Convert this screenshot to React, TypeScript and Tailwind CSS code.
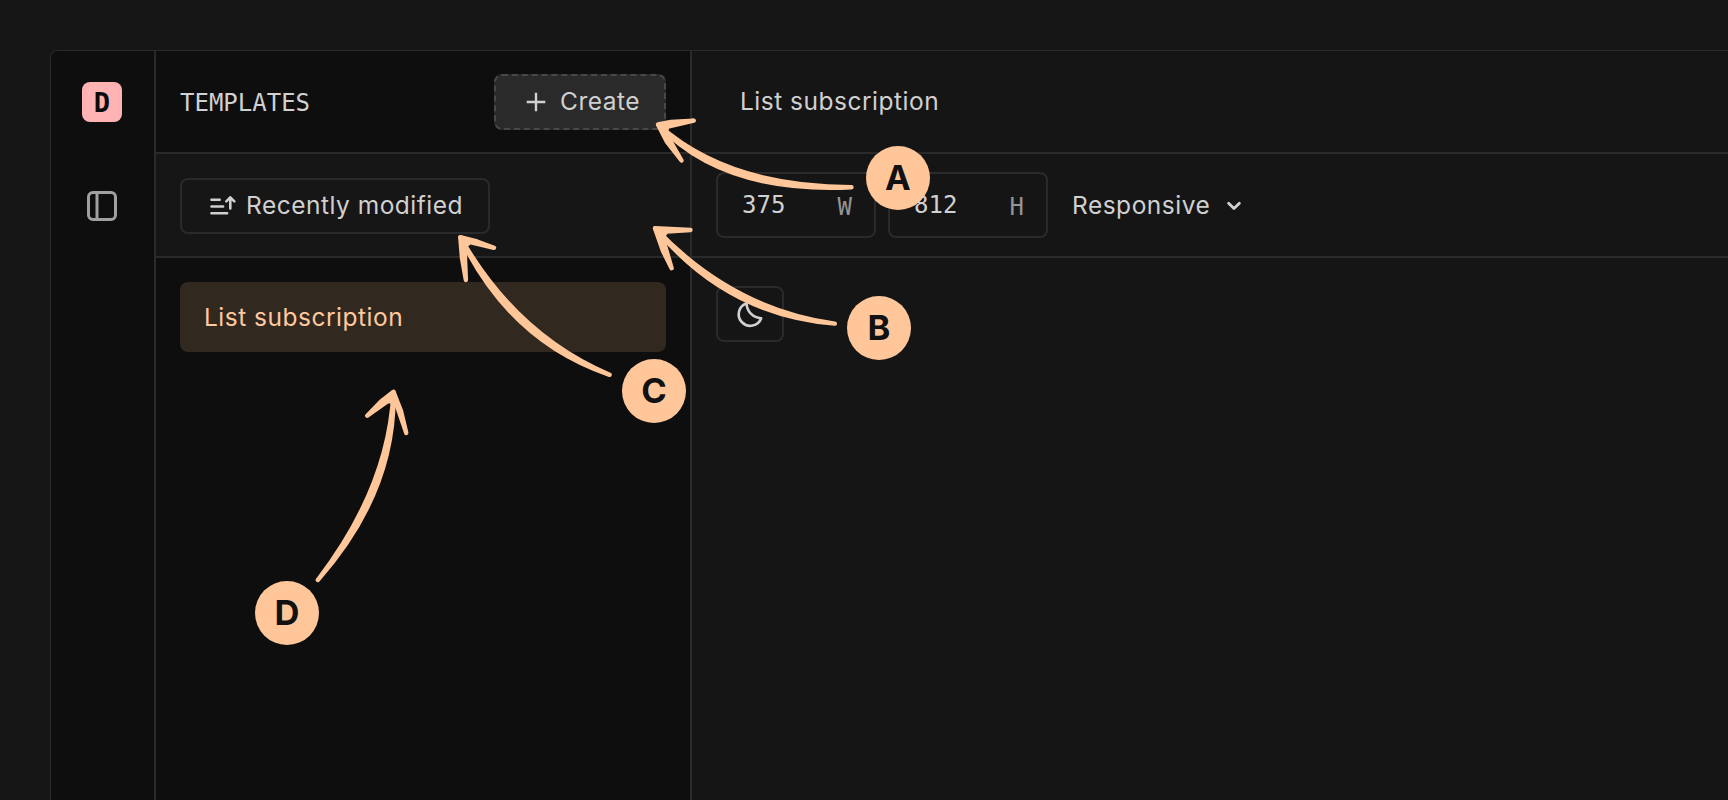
import type { ReactNode } from "react";

const sans = "font-['Inter','Liberation_Sans',sans-serif]";
const mono = "font-['DejaVu_Sans_Mono','Liberation_Mono',monospace]";
const label = "text-[24.5px] tracking-[0.5px]";

function Rail() {
  return (
    <aside className="flex w-[105px] shrink-0 flex-col items-center border-r-2 border-[#2a2a2a] bg-[#0e0e0e] pt-[31px] pr-px">
      <div className={`flex size-10 items-center justify-center rounded-lg bg-[#ffb3b3] text-[27px] leading-none font-bold text-[#0b0b0b] ${mono}`}>
        D
      </div>
      <svg className="mt-[69px] size-[30px]" viewBox="0 0 30 30" fill="none" stroke="#a0a0a0" strokeWidth="3">
        <rect x="1.5" y="1.5" width="27" height="27" rx="4.5" />
        <path d="M10 2v26" />
      </svg>
    </aside>
  );
}

function Templates() {
  return (
    <section className="flex w-[536px] shrink-0 flex-col border-r-2 border-[#2a2a2a] bg-[#0e0e0e]">
      <header className="flex h-[103px] items-center justify-between border-b-2 border-[#2a2a2a] pr-6 pl-6">
        <h2 className={`pt-[2px] text-[24px] leading-8 ${mono}`}>TEMPLATES</h2>
        <button className={`flex h-14 w-[172px] items-center rounded-lg border-2 border-dashed border-[#484848] bg-[#2a2a2a] pl-[30px] ${label}`}>
          <svg className="mr-[14px] size-5" viewBox="0 0 20 20" fill="none" stroke="currentColor" strokeWidth="2.4">
            <path d="M10 .7v18.6M.7 10h18.6" />
          </svg>
          Create
        </button>
      </header>
      <div className="flex h-[104px] items-center border-b-2 border-[#2a2a2a] bg-[#161616] pt-[2px] pl-6">
        <button className={`flex h-14 w-[310px] items-center rounded-lg border-2 border-[#2a2a2a] pb-[2px] pl-7 ${label}`}>
          <svg className="mt-px mr-2.5 h-5 w-[26px] shrink-0" viewBox="0 0 26 20" fill="none" stroke="currentColor" strokeWidth="2.6" strokeLinecap="round" strokeLinejoin="round">
            <path d="M1.5 3.8h8.2M1.5 10.5h11.6M1.5 17.2h15.6M20.3 12.5V2M16.3 5.3l4-4 4 4" />
          </svg>
          Recently modified
        </button>
      </div>
      <ul className="px-6 pt-6">
        <li className={`flex h-[70px] items-center rounded-lg bg-[#31281f] pt-px pl-6 text-[#ffc9a0] ${label}`}>
          List subscription
        </li>
      </ul>
    </section>
  );
}

function SizeField({ value, unit }: { value: string; unit: string }) {
  return (
    <label className={`flex h-[66px] w-40 items-center justify-between rounded-lg border-2 border-[#2a2a2a] pr-[22px] pl-6 text-[24px] leading-8 ${mono}`}>
      <span className="pb-px">{value}</span>
      <span className="pt-[3px] text-[#949494]">{unit}</span>
    </label>
  );
}

function Preview() {
  return (
    <main className="flex min-w-0 flex-1 flex-col bg-[#151515]">
      <header className={`flex h-[103px] items-center border-b-2 border-[#2a2a2a] pl-12 ${label}`}>
        List subscription
      </header>
      <div className="flex h-[104px] items-center gap-3 border-b-2 border-[#2a2a2a] pl-6">
        <SizeField value="375" unit="W" />
        <SizeField value="812" unit="H" />
        <div className={`ml-3 flex items-center ${label}`}>
          Responsive
          <svg className="mt-px ml-4 h-3 w-4" viewBox="0 0 16 12" fill="none" stroke="currentColor" strokeWidth="2.8" strokeLinecap="round" strokeLinejoin="round">
            <path d="m2.6 3.2 5.4 5.4 5.4-5.4" />
          </svg>
        </div>
      </div>
      <div className="pt-7 pl-6">
        <button className="flex h-14 w-[68px] items-center justify-center rounded-lg border-2 border-[#2a2a2a]">
          <svg className="size-8" viewBox="0 0 32 32" fill="none" stroke="currentColor" strokeWidth="2.6" strokeLinecap="round" strokeLinejoin="round">
            <path d="M12.6 5.2A11.6 11.6 0 1 0 27.200 20.200A15 15 0 0 1 12.600 5.200Z" />
          </svg>
        </button>
      </div>
    </main>
  );
}

function Marker({ className, children }: { className: string; children: ReactNode }) {
  return (
    <div className={`absolute flex size-16 items-center justify-center rounded-full bg-[#ffc799] text-[34.5px] leading-none font-bold text-[#111111] ${className}`}>
      {children}
    </div>
  );
}

function Annotations() {
  return (
    <div className="pointer-events-none absolute inset-0">
      <svg className="absolute inset-0 h-[800px] w-[1728px]" viewBox="0 0 1728 800" fill="#ffc799" stroke="#ffc799" strokeWidth="4.4" strokeLinecap="round" strokeLinejoin="round">
        <path d="M658.5 125Q728 187 851.500 187.300Q723 193.500 658.500 125Z" />
        <path d="M658 124.500 671 122 693.800 120.600 668 126.500 665 131.500 681.500 160.500 667 142Z" />
        <path d="M655.500 228.500Q732.500 309.500 834.800 323.600Q727 315 655.500 228.500Z" />
        <path d="M655 228.200 690.500 230 666.500 231.500 662.500 237 671.600 268.200 663 251Z" />
        <path d="M460.500 237.500Q516 335 609.600 374.800Q510 341 460.500 237.500Z" />
        <path d="M460.300 237.200 477 241.500 494 247.800 470 242 464.500 246.500 465.900 280 462 258Z" />
        <path d="M393.500 392.300Q388.500 488 317.800 580Q395.500 492 393.500 392.300Z" />
        <path d="M393.500 391.800 381 401.500 367.200 415.700 388 401 395.500 401.500 406.300 433 401 411Z" />
      </svg>
      <Marker className="top-[146px] left-[866px]">A</Marker>
      <Marker className="top-[296px] left-[847px]">B</Marker>
      <Marker className="top-[359px] left-[622px]">C</Marker>
      <Marker className="top-[581px] left-[255px]">D</Marker>
    </div>
  );
}

export default function App() {
  return (
    <div className={`relative flex h-[800px] w-full overflow-hidden bg-[#161616] pt-[50px] pl-[50px] text-[#d0d0d0] ${sans}`}>
      <div className="flex flex-1 overflow-hidden rounded-tl-lg border-t border-l border-[#2a2a2a]">
        <Rail />
        <Templates />
        <Preview />
      </div>
      <Annotations />
    </div>
  );
}
